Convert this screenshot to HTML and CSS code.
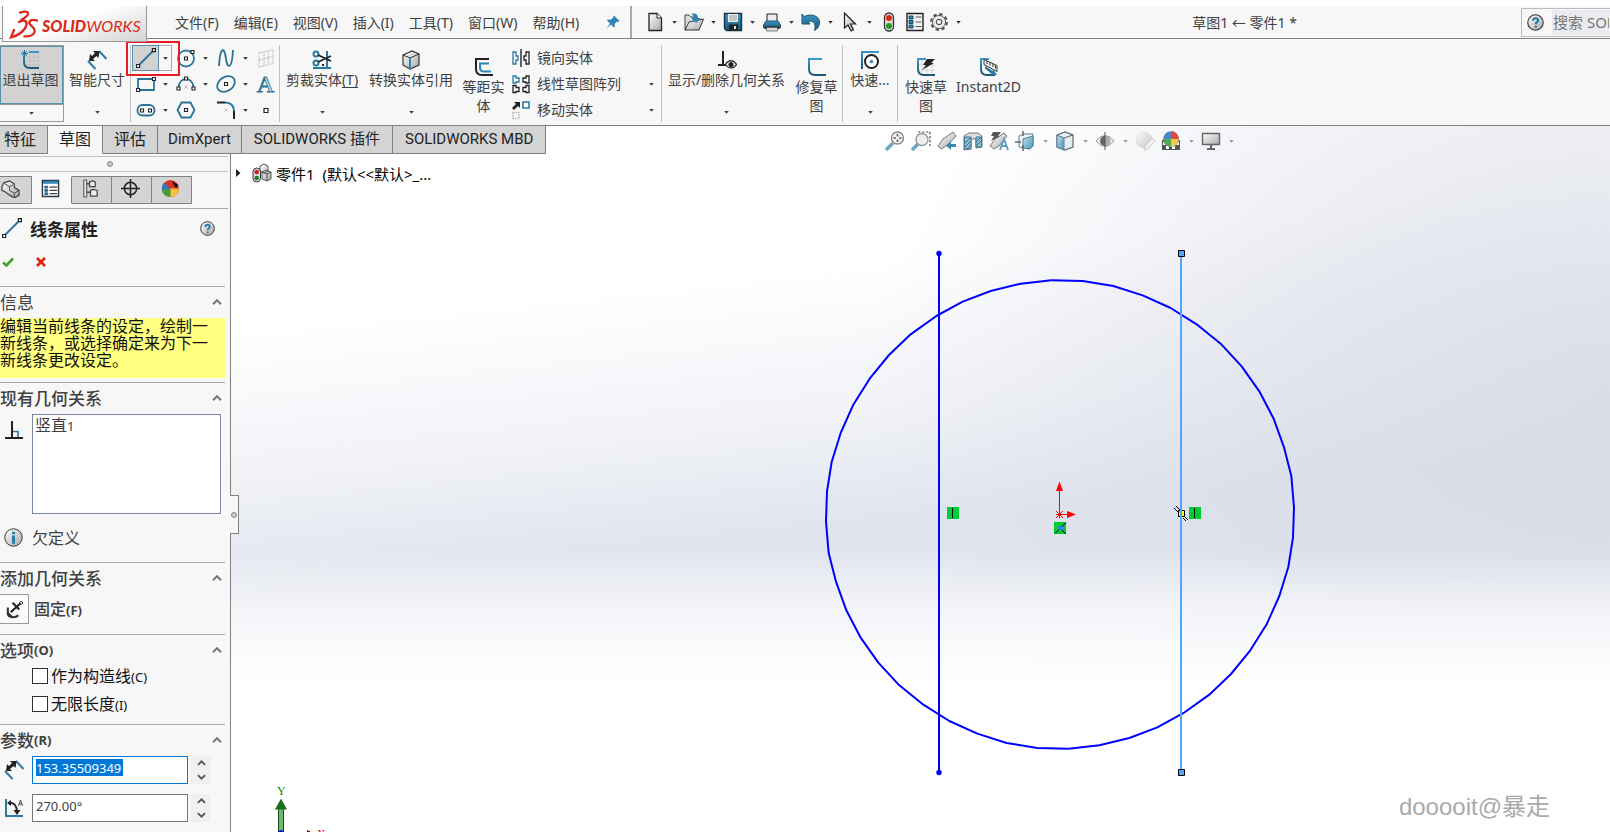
FILE: index.html
```html
<!DOCTYPE html>
<html lang="zh-CN">
<head>
<meta charset="utf-8">
<title>草图1 ← 零件1 *</title>
<link rel="stylesheet" href="styles.css">
</head>
<body>
<svg class="sprite" aria-hidden="true">
  <defs>
    <linearGradient id="blue" x1="0" y1="0" x2="0" y2="1"><stop offset="0" stop-color="#3a96c4"/><stop offset="1" stop-color="#1d5674"/></linearGradient>
    <linearGradient id="grey" x1="0" y1="0" x2="1" y2="1"><stop offset="0" stop-color="#fff"/><stop offset="1" stop-color="#a8a8a8"/></linearGradient>
    <linearGradient id="sky" x1="0" y1="0" x2="1" y2="1"><stop offset="0" stop-color="#c4e2f0"/><stop offset="1" stop-color="#4c93b8"/></linearGradient>
    <symbol id="caret" viewBox="0 0 6 4"><path d="M0 0h6L3 3.500z" fill="currentColor"/></symbol>
    <symbol id="line" viewBox="0 0 20 20"><path d="M3 17 17 3" stroke="#2a7394" stroke-width="1.800"/><path d="M.6 16.500h3v3h-3zM16.400.6h3v3h-3z" fill="#fff" stroke="#222" stroke-width="1.200"/></symbol>
    <symbol id="dim" viewBox="0 0 20 20"><path d="m1 11 7.500 8M12 1l7.500 8" stroke="#2a7aa2" stroke-width="2"/><path d="m2 11 1-7 2 2 3-3-2-2h6.500l-1 7-2-2-3.500 3 2 2z" fill="#222"/></symbol>
    <symbol id="help" viewBox="0 0 16 16"><circle cx="8" cy="8" r="7.300" fill="url(#grey)" stroke="#333"/><path d="M5.700 6.300c0-3.200 4.900-2.900 4.800-.3C10.400 7.600 8.200 7.700 8.200 9.600" fill="none" stroke="#2578a5" stroke-width="2"/><path d="M7.200 11h2v2h-2z" fill="#2578a5"/></symbol>
    <symbol id="chev" viewBox="0 0 10 6"><path d="m1 5.200 4-4 4 4" fill="none" stroke="currentColor" stroke-width="2"/></symbol>
    <symbol id="sketch" viewBox="0 0 20 20"><path d="M15 2H2v10q0 6 6 6h11" fill="none" stroke="url(#blue)" stroke-width="2"/></symbol>
  </defs>
</svg>

<header class="topbar">
  <div class="logo">
    <svg class="logo-mark" viewBox="0 0 90 90" fill="none" stroke="#da291c" stroke-linecap="round"><path d="M36 11c14-5 26-4 24 4-2 7-12 13-20 18" stroke-width="7"/><path d="M33 39c16-8 25-4 22 10-4 16-24 31-46 36l9-22" stroke-width="7"/><path d="M88 35c-12-4-24-3-24 6s18 13 16 26c-2 12-17 16-31 15" stroke-width="7"/></svg>
    <span class="logo-text"><b>SOLID</b>WORKS</span>
  </div>
  <nav class="menu">
    <button>文件(F)</button><button>编辑(E)</button><button>视图(V)</button><button>插入(I)</button><button>工具(T)</button><button>窗口(W)</button><button>帮助(H)</button>
  </nav>
  <button class="pin" aria-label="固定菜单"><svg viewBox="0 0 14 14"><path d="m8 .5 5.500 5.500-1 1-1.500-.5-2.500 2.500.5 2.500-1 1L5 9.500.5 13.500 4 8.500.8 5.300l1-.8 2.700.3L7.500 2.500 7 1.500z" fill="#2f86b5"/></svg></button>
  <div class="quick">
    <button class="q-icon" aria-label="新建"><svg viewBox="0 0 20 20"><path d="M4 1.500h8l4.500 4.500v12.500H4z" fill="url(#grey)" stroke="#222" stroke-width="1.300"/><path d="M12 1.500V6h4.500" fill="#fff" stroke="#222"/></svg></button><button class="dd" aria-label="更多"><svg><use href="#caret"/></svg></button>
    <button class="q-icon" aria-label="打开"><svg viewBox="0 0 20 20"><path d="M1 18V3h4l2 2h3v5l-5 2z" fill="#ddd" stroke="#444"/><path d="m1 18 4-8 14.500-3L15 18z" fill="url(#grey)" stroke="#333"/><path d="M7 2c5-1.500 7 1 7 4h3l-5 5-5-5h3c0-2-1-3-3-4z" fill="#2f86b5"/></svg></button><button class="dd" aria-label="更多"><svg><use href="#caret"/></svg></button>
    <button class="q-icon" aria-label="保存"><svg viewBox="0 0 20 20"><path d="M1.500 1.500h17v17h-15l-2-2z" fill="url(#blue)" stroke="#1b3443" stroke-width="1.400"/><path d="M5 2h10v8H5z" fill="#eee"/><path d="M6 4h8M6 6h8M6 8h8" stroke="#999"/><path d="M6 12.500h9v6H6z" fill="#222"/><path d="M11 14h2v3h-2z" fill="#ddd"/></svg></button><button class="dd" aria-label="更多"><svg><use href="#caret"/></svg></button>
    <button class="q-icon" aria-label="打印"><svg viewBox="0 0 20 20"><path d="M5 2h10v8H5z" fill="#eee" stroke="#222"/><path d="M1.500 13 4 9h12l2.500 4v3h-17z" fill="url(#blue)" stroke="#24546d"/><path d="M3 14.500h14V17H3z" fill="#222"/><path d="M4.500 15.500h11v3.500h-11z" fill="#ddd" stroke="#555" stroke-width=".7"/></svg></button><button class="dd" aria-label="更多"><svg><use href="#caret"/></svg></button>
    <button class="q-icon" aria-label="撤消"><svg viewBox="0 0 20 20"><path d="m1 2 2.500 2.500C9 1.500 18 3 18.500 10c.2 4-2 7-5 8.500 1-3 1.500-9-4.500-9.500l-2 .3 2 2.700H1z" fill="url(#blue)" stroke="#1d5674"/></svg></button><button class="dd" aria-label="更多"><svg><use href="#caret"/></svg></button>
    <button class="q-icon" aria-label="选择"><svg viewBox="0 0 20 20"><path d="M4.500 1v15l3.500-3 3 6 2.500-1.300-3-5.700h5z" fill="url(#grey)" stroke="#222" stroke-width="1.200"/></svg></button><button class="dd" aria-label="更多"><svg><use href="#caret"/></svg></button>
    <button class="q-icon" aria-label="重建"><svg viewBox="0 0 20 20"><rect x="5.500" y="1" width="9" height="18" rx="4.500" fill="#ddd" stroke="#333" stroke-width="1.300"/><circle cx="10" cy="6" r="3" fill="#dd2a12"/><circle cx="10" cy="14" r="3" fill="#299a1d"/></svg></button><button class="q-icon wide" aria-label="文件属性"><svg viewBox="0 0 20 20"><path d="M2 1.500h16v17H2z" fill="#f2f2f2" stroke="#222" stroke-width="1.400"/><path d="M4 4h4v3H4zM4 8.500h4v3H4zM4 13h4v3H4z" fill="#2f86b5" stroke="#174a64"/><path d="M10.500 5h6M10.500 10h6M10.500 14.500h6" stroke="#555"/></svg></button><button class="q-icon" aria-label="选项"><svg viewBox="0 0 20 20"><circle cx="10" cy="10" r="7.800" fill="none" stroke="#555" stroke-width="2.200" stroke-dasharray="3.400 2.730"/><circle cx="10" cy="10" r="6.500" fill="#f3f3f3" stroke="#555"/><circle cx="10" cy="10" r="2.700" fill="#fff" stroke="#555" stroke-width="1.200"/></svg></button><button class="dd" aria-label="更多"><svg><use href="#caret"/></svg></button>
  </div>
  <div class="doc-title">草图1 ← 零件1 *</div>
  <div class="search"><svg class="search-help"><use href="#help"/></svg><input type="text" aria-label="搜索" placeholder="搜索 SOLIDWORKS 帮助"></div>
</header>

<section class="ribbon" aria-label="草图工具">
  <div class="group">
    <div class="exit">
      <button class="exit-main"><svg class="ic" viewBox="0 0 20 20"><path d="M9 3v14M13 3v14M17 3v14M5 7h15M5 11h15M5 15h15" stroke="#bbb" stroke-width=".8"/><path d="M18 2H8M3 6v6q0 6 6 6h9" fill="none" stroke="url(#blue)" stroke-width="2"/><path d="M3.500 0v7M0 3.500h7M1 1l5 5M6 1 1 6" stroke="#2578a5"/></svg><span>退出草图</span></button>
      <button class="exit-more" aria-label="更多"><svg class="caret"><use href="#caret"/></svg></button>
    </div>
    <button class="tool w-dim"><svg class="ic"><use href="#dim"/></svg><span>智能尺寸</span><svg class="caret"><use href="#caret"/></svg></button>
  </div>
  <div class="group sketch-grid">
    <button class="cell on" aria-label="直线"><svg><use href="#line"/></svg></button><button class="dd on-dd" aria-label="更多"><svg><use href="#caret"/></svg></button>
    <button class="cell" aria-label="圆"><svg viewBox="0 0 20 20"><circle cx="10" cy="10.500" r="8" fill="none" stroke="#2a7aa2" stroke-width="1.800"/><path d="M8.500 9h3v3h-3zM15 2.500h3v3h-3z" fill="#fff" stroke="#222" stroke-width="1.100"/></svg></button><button class="dd" aria-label="更多"><svg><use href="#caret"/></svg></button>
    <button class="cell" aria-label="样条曲线"><svg viewBox="0 0 20 20"><path d="M3 18C4-1 8-1 9.500 8 11 22 16 22 17 2" fill="none" stroke="#2a7394" stroke-width="1.800"/></svg></button><button class="dd" aria-label="更多"><svg><use href="#caret"/></svg></button>
    <button class="cell" aria-label="基准面"><svg viewBox="0 0 20 20"><path d="M3 5 17 1.500v14L3 19zM3 12l14-3.500M8 4v13.500M12.500 3v13.500" fill="none" stroke="#c4c4c4" stroke-width="1.300" stroke-dasharray="1.500 1"/></svg></button>

    <button class="cell" aria-label="矩形"><svg viewBox="0 0 20 20"><path d="M2 5h16v11H2z" fill="none" stroke="#2a7394" stroke-width="1.800"/><path d="M.6 14.500h3v3h-3zM16.400 3.500h3v3h-3z" fill="#fff" stroke="#222" stroke-width="1.100"/></svg></button><button class="dd" aria-label="更多"><svg><use href="#caret"/></svg></button>
    <button class="cell" aria-label="圆弧"><svg viewBox="0 0 20 20"><path d="M2.500 14c0-12 15-12 15 0" fill="none" stroke="#2a7394" stroke-width="1.800"/><path d="M1 13h3v3H1zM16 13h3v3h-3zM8.500 3h3v3h-3z" fill="#fff" stroke="#222" stroke-width="1.100"/><path d="m8.500 11.500 3 3M11.500 11.500l-3 3" stroke="#bbb"/></svg></button><button class="dd" aria-label="更多"><svg><use href="#caret"/></svg></button>
    <button class="cell" aria-label="椭圆"><svg viewBox="0 0 20 20"><ellipse cx="10" cy="10" rx="9.500" ry="7" transform="rotate(-35 10 10)" fill="none" stroke="#2a7394" stroke-width="1.800"/><path d="M8.500 8.500h3v3h-3z" fill="#fff" stroke="#222" stroke-width="1.100"/></svg></button><button class="dd" aria-label="更多"><svg><use href="#caret"/></svg></button>
    <button class="cell letter">A</button>

    <button class="cell" aria-label="槽口"><svg viewBox="0 0 20 20"><rect x="1.500" y="5" width="17" height="10.500" rx="5" fill="none" stroke="#2a7394" stroke-width="1.800"/><path d="M4.500 9h3v3h-3zM12.500 9h3v3h-3z" fill="#fff" stroke="#222" stroke-width="1.100"/></svg></button><button class="dd" aria-label="更多"><svg><use href="#caret"/></svg></button>
    <button class="cell" aria-label="多边形"><svg viewBox="0 0 20 20"><path d="m1.500 10 4-7.500h9l4 7.500-4 7.500h-9z" fill="none" stroke="#2a7394" stroke-width="1.800"/><path d="M8.500 8.500h3v3h-3z" fill="#fff" stroke="#222" stroke-width="1.100"/></svg></button><span></span>
    <button class="cell" aria-label="圆角"><svg viewBox="0 0 20 20"><path d="M1 2.500h8" stroke="#222" stroke-width="2"/><path d="M9 2.500q9 0 9 9" fill="none" stroke="#2a7aa2" stroke-width="2"/><path d="M18 11v8" stroke="#222" stroke-width="2"/><path d="m8.500 8.500 3 3M11.500 8.500l-3 3" stroke="#bbb"/></svg></button><button class="dd" aria-label="更多"><svg><use href="#caret"/></svg></button>
    <button class="cell" aria-label="点"><svg viewBox="0 0 20 20"><path d="M8 8.500h4v4H8z" fill="#fff" stroke="#222" stroke-width="1.200"/></svg></button>
    <div class="callout"></div>
  </div>
  <div class="group">
    <button class="tool w-trim"><svg class="ic" viewBox="0 0 20 20"><path d="M15 1v18M1 18h18" stroke="#2a7aa2" stroke-width="2"/><circle cx="4" cy="4" r="2.500" fill="none" stroke="#2a7aa2" stroke-width="2"/><circle cx="4" cy="13" r="2.500" fill="none" stroke="#2a7aa2" stroke-width="2"/><path d="m6 5 13 6M6 12l13-6M10 15h2" stroke="#222" stroke-width="1.800"/></svg><span>剪裁实体<u class="key">(T)</u></span><svg class="caret"><use href="#caret"/></svg></button>
    <button class="tool w-convert"><svg class="ic" viewBox="0 0 20 20"><path d="m2 5 9-4 7 3v11l-9 4-7-4z" fill="url(#grey)" stroke="#333" stroke-width="1.200"/><path d="m2 5 7 3 9-4" fill="none" stroke="#333"/><path d="M9 8v11" stroke="#2f86b5" stroke-width="2"/></svg><span>转换实体引用</span><svg class="caret"><use href="#caret"/></svg></button>
    <button class="tool low w-offset"><svg class="ic" viewBox="0 0 20 20"><path d="M15 2H2v10q0 6 6 6h11" fill="none" stroke="#222" stroke-width="2"/><path d="M15 6.500H6v4q0 4 4 4h7" fill="none" stroke="#2f86b5" stroke-width="2"/></svg><span>等距实体</span></button>
    <div class="list">
      <button><svg viewBox="0 0 20 20" fill="none"><path d="M10 1v18" stroke="#222" stroke-width="1.400"/><path d="M2 4h3v4h2v4H5v4H2z" stroke="#2a7aa2" stroke-width="1.300"/><path d="M18 4h-3v4h-2v4h2v4h3z" stroke="#222" stroke-width="1.300"/></svg><span>镜向实体</span></button>
      <button><svg viewBox="0 0 20 20" fill="none" stroke-width="1.300"><path d="M2 2h3v2h3v4H5v1H2z" stroke="#2a7aa2"/><path d="M12 4h3V2h3v7h-3V8h-3zM2 11.500h3v2h3v4H5v1H2zM12 13.500h3v-2h3v7h-3v-1h-3z" stroke="#222"/></svg><span>线性草图阵列</span><svg class="caret"><use href="#caret"/></svg></button>
      <button><svg viewBox="0 0 20 20"><path d="m1 8 4-4-2-2h6v6L7 6 3 10z" fill="#222"/><path d="M12 2h6v6h-6z" fill="#fff" stroke="#2a7aa2" stroke-width="1.600"/><path d="M2 12.500h6v6H2z" fill="none" stroke="#bbb" stroke-width="1.600" stroke-dasharray="1.500 1"/></svg><span>移动实体</span><svg class="caret"><use href="#caret"/></svg></button>
    </div>
  </div>
  <div class="group">
    <button class="tool w-rel"><svg class="ic" viewBox="0 0 20 20"><path d="M6 1v14M1 15h8" stroke="#222" stroke-width="2"/><path d="M8.500 14.500c3-5 8-5 11 0-3 4.500-8 4.500-11 0z" fill="#fff" stroke="#333" stroke-width="1.300"/><circle cx="14" cy="14.500" r="2.600" fill="#222"/></svg><span>显示/删除几何关系</span><svg class="caret"><use href="#caret"/></svg></button>
    <button class="tool low w-fix"><svg class="ic"><use href="#sketch"/></svg><span>修复草图</span></button>
  </div>
  <div class="group">
    <button class="tool w-snap"><svg class="ic" viewBox="0 0 20 20"><path d="M2 19V2h17" fill="none" stroke="url(#blue)" stroke-width="2"/><circle cx="11.500" cy="11.500" r="6.500" fill="#fff" stroke="#222" stroke-width="2"/><circle cx="11.500" cy="11.500" r="1.700" fill="#2f86b5"/></svg><span>快速...</span><svg class="caret"><use href="#caret"/></svg></button>
  </div>
  <div class="group last">
    <button class="tool low w-rapid"><svg class="ic" viewBox="0 0 20 20"><path d="M6 2v17M11 2v17M16 2v17M1 8h18M1 13h18" stroke="#ccc" stroke-width=".8"/><path d="M10 2H2v10q0 6 6 6h11" fill="none" stroke="url(#blue)" stroke-width="2"/><path d="M11 2h8l-4 4h3L6 13l4-5H7z" fill="#222"/></svg><span>快速草图</span></button>
    <button class="tool low w-instant"><svg class="ic" viewBox="0 0 20 20"><path d="M10 2H2v10q0 6 6 6h8" fill="none" stroke="url(#blue)" stroke-width="2"/><path d="m5 2.500 13 6v6l-13-7z" fill="#eee" stroke="#333"/><path d="M8 4v3M11 5.500v3M14 7v3M16.500 8.500v3" stroke="#333"/><path d="m6 9 8 5v-2l4 6h-7l1-1.500-6-5z" fill="#2a7aa2"/></svg><span>Instant2D</span></button>
  </div>
</section>

<main class="workspace">
  <div class="backdrop"></div>
  <svg class="scene" viewBox="0 126 1610 706" preserveAspectRatio="xMidYMin meet" fill="none" role="img" aria-label="草图">
    <g transform="translate(820 270) scale(.33333)" stroke="#00f" stroke-width="6" stroke-linejoin="round">
      <path id="half" d="M694 31 788 33 880 48 968 76 1052 114 1130 163 1202 221 1265 289 1318 364 1361 446 1392 532 1414 618 1422 712 1419 803 1405 891 1378 978 1340 1063 1291 1141 1233 1212 1168 1274 1091 1329 1012 1372 928 1404 838 1426 746 1436"/>
      <use href="#half" transform="rotate(180 720 733.500)"/>
    </g>
    <path d="M939 253v520" stroke="#00f" stroke-width="2"/><circle cx="939" cy="253.500" r="2.700" fill="#00f"/><circle cx="939" cy="772.500" r="2.700" fill="#00f"/>
    <path d="M1181 253v520" stroke="#50a6fa" stroke-width="2"/>
    <path d="M1178.500 250.500h6v6h-6zM1178.500 769.500h6v6h-6z" fill="#50a6fa" stroke="#000"/>
    <path d="M1059.500 514v-24M1060 514.500h10M1056 511l7 7M1063 511l-7 7M1056 514.500h4M1059.500 514v4" stroke="#f00"/>
    <path d="m1056 491 3.500-9.500 3.500 9.500zM1067 511l9 3.500-9 3.500z" fill="#f00"/>
    <path d="M947 507h12v12h-12zM1189 507h12v12h-12zM1054 522h12v12h-12z" fill="#0c3"/>
    <path d="M952.500 508v10M1194.500 508v10M1055 533.500l11-11M1060 528l6 6" stroke="#000"/><circle cx="1060.500" cy="528" r="2.500" fill="#3b7df0"/>
    <path d="M1178.500 510.500h6v6h-6z" fill="#ff0" stroke="#000"/><path d="m1174 508 5 5M1176 506l4 4M1183 518l3 3M1185 517l3 3" stroke="#000"/><path d="M1181 509v9" stroke="#50a6fa" stroke-width="2"/>
    <path d="M278.500 808h5v24h-5z" fill="#72b572" stroke="#145214"/><path d="m275 809.500 6-11 6 11z" fill="#197019"/><path d="M278 832q3-4 6 0z" fill="#00f"/><path d="m307 830 4 2h-4z" fill="#600"/>
    <text class="axis" x="277" y="795" fill="#080">Y</text><text class="axis" x="317" y="838" fill="#f00">X</text>
  </svg>

  <div class="tab-row">
    <div class="tabs">
      <button class="tab">特征</button><button class="tab active">草图</button><button class="tab">评估</button><button class="tab latin narrow">DimXpert</button><button class="tab latin">SOLIDWORKS 插件</button><button class="tab latin">SOLIDWORKS MBD</button>
    </div>
    <div class="view-tools">
      <button aria-label="整屏显示全图"><svg viewBox="0 0 20 20"><path d="m1 19 7-7" stroke="#6ba6c6" stroke-width="3.500"/><circle cx="12.500" cy="7" r="6" fill="#f4f4f4" stroke="#888" stroke-width="1.400"/><path d="M12.500 3v8M8.500 7h8" stroke="#555" stroke-width="1.600" stroke-dasharray="2.500 3"/></svg></button>
      <button aria-label="局部放大"><svg viewBox="0 0 20 20"><path d="m1 19 6-6" stroke="#6ba6c6" stroke-width="3.500"/><circle cx="11" cy="8.500" r="6" fill="#eee" stroke="#999" stroke-width="1.400"/><path d="M7 1h12v14" fill="none" stroke="#555" stroke-width="1.200" stroke-dasharray="2.500 1.500"/></svg></button>
      <button aria-label="上一视图"><svg viewBox="0 0 20 20"><path d="m1 15 5-7L16 1l3 4-8 9-7 4z" fill="url(#grey)" stroke="#777"/><path d="M9 14.500 14 10v3h5v3h-5v3z" fill="#3b88b0"/></svg></button>
      <button aria-label="剖面视图"><svg viewBox="0 0 20 20"><path d="M1 5 6 2h9l4 3v11l-6 1V8H8v10l-7 1z" fill="#ddd" stroke="#777"/><path d="M1.500 6H8v12H1.500zM13 6h5.500v10H13z" fill="#8bc0da" stroke="#4a7287"/><path d="m2 12 5-5M2 16l6-6M4 18l4-4M13 11l5-5M13 15l5-5" stroke="#326b87"/></svg></button>
      <button aria-label="动态注解视图"><svg viewBox="0 0 20 20"><path d="m1 15 5-7L15 2l3 3-8 10-5 3z" fill="url(#grey)" stroke="#777"/><path d="M4 1h8l-3 4h2L2 10l3-5H2z" fill="#555"/><path d="m11 19 4-11 4 11M12.500 15h5" fill="none" stroke="#5b9dbf" stroke-width="1.800"/></svg></button>
      <button aria-label="视图定向"><svg viewBox="0 0 20 20"><path d="m4 5 4-2h10v12l-3 3-11-2z" fill="#eef5f9" stroke="#617f8e"/><path d="m8 8 10-3v10l-3 3-7-1z" fill="url(#sky)" stroke="#537f95"/><path d="M8 0v5M0 11h6M8 14v6" fill="none" stroke="#666" stroke-width="1.500"/></svg></button><button class="dd" aria-label="更多"><svg><use href="#caret"/></svg></button>
      <button aria-label="显示样式"><svg viewBox="0 0 20 20"><path d="m2 4 8-3 8 3v12l-8 3-8-3z" fill="#e4eff5" stroke="#666" stroke-width="1.200"/><path d="m2 4 7 3v12l-7-3z" fill="url(#sky)" stroke="#537f95"/><path d="m9 7 9-3" stroke="#666"/></svg></button><button class="dd" aria-label="更多"><svg><use href="#caret"/></svg></button>
      <button aria-label="隐藏/显示"><svg viewBox="0 0 20 20"><path d="M1 10q9-11 18 0-9 11-18 0z" fill="#eee" stroke="#999"/><circle cx="10" cy="10" r="5" fill="#666"/><path d="M10 1v18" stroke="#555"/><path d="M10.500 5a5 5 0 0 1 0 10z" fill="#aaa"/></svg></button><button class="dd" aria-label="更多"><svg><use href="#caret"/></svg></button>
      <button aria-label="编辑外观"><svg class="faint" viewBox="0 0 20 20"><circle cx="9" cy="9" r="8" fill="url(#grey)" stroke="#ccc"/><path d="m9 19 1-4 7-8 3 3-7 8z" fill="#eee" stroke="#aaa"/></svg></button>
      <button aria-label="应用布景"><svg viewBox="0 0 20 20"><path d="M1 9h18v10H1z" fill="#555"/><path d="M2 11h3v3H2zM15 11h3v3h-3zM5 15h3v3H5zM11 15h3v3h-3z" fill="#fff"/><circle cx="10" cy="8" r="7.800" fill="#4e83c7"/><path d="M10 8V.2A7.800 7.800 0 0 1 17.800 8z" fill="#e0483a"/><path d="M10 8h7.800A7.800 7.800 0 0 1 10 15.800z" fill="#f0c64c"/><path d="M2.200 8H10v7.800A7.800 7.800 0 0 1 2.200 8z" fill="#52ab51"/></svg></button><button class="dd" aria-label="更多"><svg><use href="#caret"/></svg></button>
      <button aria-label="视图设定"><svg viewBox="0 0 20 20"><path d="M1.500 2.500h17v11h-17z" fill="url(#grey)" stroke="#666" stroke-width="1.400"/><path d="M10 14v4M6 18h8" stroke="#666" stroke-width="2"/></svg></button><button class="dd" aria-label="更多"><svg><use href="#caret"/></svg></button>
    </div>
  </div>

  <div class="body-row">
    <aside class="panel">
      <div class="grip"><i class="dot"></i></div>
      <div class="ptabs">
        <button class="first" aria-label="设计树"><svg viewBox="0 0 20 20"><path d="m1 8 2-4 6-2 5 3v4l5 3v5l-5 3-5-3-4-3-4-2z" fill="url(#grey)" stroke="#444" stroke-width="1.300"/><path d="m4 5 5 3 4-2M9 8v4l5 3v4M14 15l5-3" fill="none" stroke="#444"/></svg></button>
        <button class="active" aria-label="属性"><svg viewBox="0 0 20 20"><path d="M1.500 1.500h17v17h-17z" fill="#fff" stroke="#2b3a44" stroke-width="1.500"/><path d="M2 2h16v3H2z" fill="#2f86b5"/><path d="M4 7.500h3v2H4zM4 11h3v2H4zM4 14.500h3v2H4z" fill="#2f86b5" stroke="#174a64" stroke-width=".8"/><path d="M9 8.500h8M9 12h8M9 15.500h8" stroke="#444" stroke-width="1.300"/></svg></button>
        <button aria-label="配置"><svg viewBox="0 0 20 20"><path d="M3 1v18h3V1z" fill="#eee" stroke="#444"/><path d="M6 5h4M6 14h4" stroke="#444" stroke-width="1.500"/><path d="m9 3 3-1 3 1v5H9zM10 12l3-1 4 1v6h-7z" fill="#eee" stroke="#444" stroke-width="1.300"/></svg></button>
        <button aria-label="尺寸专家"><svg viewBox="0 0 20 20"><circle cx="10" cy="10" r="6.500" fill="none" stroke="#222" stroke-width="1.600"/><path d="M10 0v20M0 10h20" stroke="#222" stroke-width="1.600"/></svg></button>
        <button aria-label="外观"><svg viewBox="0 0 20 20"><circle cx="10" cy="10" r="9" fill="#d93524"/><path d="M10 10 3 4a9 9 0 0 0-2 8z" fill="#3678c5"/><path d="m1 12 9-2v9a9 9 0 0 1-9-7z" fill="#3ba13a"/><path d="M10 10h9a9 9 0 0 1-9 9z" fill="#f1c53b"/><path d="m11 2 7 4-2 4z" fill="#111"/></svg></button>
      </div>
      <div class="ptitle">
        <svg class="ic"><use href="#line"/></svg><h1>线条属性</h1><button class="help" aria-label="帮助"><svg><use href="#help"/></svg></button>
      </div>
      <div class="confirm">
        <button aria-label="确定"><svg viewBox="0 0 12 10"><path d="m1 5.500 3.500 3L11 1.500" fill="none" stroke="#3da528" stroke-width="2.600"/></svg></button>
        <button aria-label="取消"><svg class="x" viewBox="0 0 10 10"><path d="m1 1 8 8M9 1 1 9" stroke="#dd2309" stroke-width="2.600"/></svg></button>
      </div>
      <section class="sec">
        <h2 class="plain">信息<svg><use href="#chev"/></svg></h2>
        <p class="note">编辑当前线条的设定，绘制一新线条，或选择确定来为下一新线条更改设定。</p>
      </section>
      <section class="sec existing">
        <h2>现有几何关系<svg><use href="#chev"/></svg></h2>
        <div class="rel"><svg class="ic" viewBox="0 0 20 20"><path d="M8 1v16M1 18h18" stroke="#222" stroke-width="2"/><path d="M9 11.500h5V17" fill="none" stroke="#2a7aa2" stroke-width="1.600"/></svg><div class="relbox">竖直<small>1</small></div></div>
        <div class="status"><svg viewBox="0 0 20 20"><circle cx="10" cy="10" r="9.200" fill="url(#grey)" stroke="#333"/><path d="M8.500 4h3v2.500h-3zM8.500 8h3v8.500h-3z" fill="#2578a5"/></svg>欠定义</div>
      </section>
      <section class="sec">
        <h2>添加几何关系<svg><use href="#chev"/></svg></h2>
        <button class="fix"><span class="fixbox"><svg viewBox="0 0 20 20"><path d="M8 3 15 10M6 13 17 3" stroke="#222" stroke-width="2.200"/><circle cx="17" cy="3" r="1.500" fill="#fff" stroke="#222"/><path d="M3 8v7c2 4 8 4 11 1" fill="none" stroke="#333" stroke-width="2.200"/><path d="M3 18h6l-6-6z" fill="#333"/></svg></span><span>固定<small>(F)</small></span></button>
      </section>
      <section class="sec options">
        <h2>选项<small>(O)</small><svg><use href="#chev"/></svg></h2>
        <label><input type="checkbox"><span>作为构造线<small>(C)</small></span></label>
        <label><input type="checkbox"><span>无限长度<small>(I)</small></span></label>
      </section>
      <section class="sec">
        <h2>参数<small>(R)</small><svg><use href="#chev"/></svg></h2>
        <div class="param"><svg class="ic"><use href="#dim"/></svg><input class="selected" type="text" aria-label="长度" value="153.35509349"><div class="spin"><button aria-label="增加"><svg><use href="#chev"/></svg></button><button class="down" aria-label="减少"><svg><use href="#chev"/></svg></button></div></div>
        <div class="param"><svg class="ic" viewBox="0 0 20 20"><path d="M2 1v17h17" fill="none" stroke="#2a7aa2" stroke-width="2"/><path d="M5 5c5-1 8 3 8 9" fill="none" stroke="#222" stroke-width="1.800"/><path d="m3 5 4-3v6zM9.500 12h7L13 17z" fill="#222"/><path d="m14.500 8 2-6 2 6M15 6h3" fill="none" stroke="#444"/></svg><input type="text" aria-label="角度" value="270.00°"><div class="spin"><button aria-label="增加"><svg><use href="#chev"/></svg></button><button class="down" aria-label="减少"><svg><use href="#chev"/></svg></button></div></div>
      </section>
      <button class="handle" aria-label="折叠面板"><i class="dot"></i></button>
    </aside>
    <div class="viewport">
      <button class="tree"><svg class="tri" viewBox="0 0 5 8"><path d="m0 0 4.500 4L0 8z" fill="#222"/></svg><svg class="part" viewBox="0 0 20 20"><path d="m8 3 4-2 4 2v5l-4 2-4-2zM10 9l4-2 5 2v7l-4 2-5-2z" fill="url(#grey)" stroke="#555"/><path d="M10 9l5 2 4-2M15 11v7" fill="none" stroke="#555"/><rect x="1" y="5" width="7.500" height="14" rx="3.700" fill="#ddd" stroke="#333"/><circle cx="4.700" cy="9" r="2.300" fill="#c22"/><circle cx="4.700" cy="15" r="2.300" fill="#182"/></svg><span>零件1&nbsp; (默认&lt;&lt;默认&gt;_...</span></button>
      <div class="watermark">dooooit@暴走</div>
    </div>
  </div>
</main>
</body>
</html>
```
FILE: styles.css
```css
* { box-sizing: border-box; }
body {
  margin: 0;
  height: 100vh;
  display: flex;
  flex-direction: column;
  overflow: hidden;
  padding-top: 6px;
  background: #fff;
  color: #404040;
  font-family: "Noto Sans", "Noto Sans CJK SC", sans-serif;
  font-size: 14px;
}
button {
  margin: 0;
  padding: 0;
  border: 0;
  background: none;
  color: inherit;
  font: inherit;
}
svg { display: block; flex: none; }
.sprite { position: absolute; width: 0; height: 0; }
.ic { width: 20px; height: 20px; }
.caret { width: 5px; height: 3px; }

/* Top bar */
.topbar {
  position: relative;
  z-index: 2;
  flex: none;
  height: 33px;
  display: flex;
  align-items: center;
  background: #f7f7f7;
  border-bottom: 1px solid #808080;
}
.logo {
  align-self: flex-start;
  flex: none;
  width: 145px;
  height: 36px;
  margin-left: 2px;
  padding-left: 5px;
  display: flex;
  align-items: center;
  border: 1px solid #999;
  border-top: 0;
  background: linear-gradient(160deg, #fff 45%, #d4d4d4);
}
.logo-mark { width: 30px; height: 30px; }
.logo-text {
  margin-left: 4px;
  padding-top: 4px;
  color: #da291c;
  font: italic 16px/20px Lato, sans-serif;
}
.logo-text b { font-weight: 900; }
.menu { display: flex; gap: 15px; margin-left: 28px; flex: none; }
.menu button { white-space: nowrap; }
.pin { margin-left: 27px; flex: none; }
.pin svg { width: 14px; height: 14px; }
.quick {
  flex: none;
  height: 32px;
  margin-left: 10px;
  padding-left: 13px;
  display: flex;
  align-items: center;
  border-left: 2px solid #aaa;
}
.q-icon { width: 20px; }
.q-icon svg { width: 20px; height: 20px; }
.q-icon.wide { width: 30px; padding-left: 6px; }
.dd { width: 19px; display: grid; place-items: center; color: #333; }
.dd svg { width: 5px; height: 3px; }
.doc-title { flex: 1; padding-left: 224px; white-space: nowrap; }
.search {
  flex: none;
  width: 89px;
  height: 29px;
  display: flex;
  align-items: center;
  gap: 8px;
  padding: 1px 0 1px 5px;
  border: 1px solid #bbb;
  border-right: 0;
}
.search-help { width: 17px; height: 17px; }
.search input {
  flex: 1;
  min-width: 0;
  height: 25px;
  padding: 0 1px;
  border: 0;
  background: #e9ebf0;
  font: inherit;
  font-size: 15px;
}
.search input::placeholder { color: #777; }

/* Ribbon */
.ribbon {
  position: relative;
  z-index: 1;
  flex: none;
  height: 87px;
  padding: 6px 0 3px;
  display: flex;
  background: #f7f7f7;
  border-bottom: 1px solid #808080;
}
.group { display: flex; flex: none; border-right: 1px solid #c0c0c0; }
.group.last { border: 0; }
.exit { width: 64px; display: flex; flex-direction: column; border: 1px solid #999; border-left: 0; }
.exit-main {
  height: 58px;
  padding: 4px 2px 0 0;
  display: flex;
  flex-direction: column;
  align-items: center;
  line-height: 19px;
  background: #d2d2d2;
  outline: 1px solid #5b8fb0;
  outline-offset: -1px;
}
.exit-more { flex: 1; display: grid; place-items: center; border-top: 1px solid #999; }
.tool {
  height: 78px;
  padding-top: 5px;
  display: flex;
  flex-direction: column;
  align-items: center;
  line-height: 19px;
}
.tool > .caret { margin-top: 22px; }
.tool.low { padding-top: 12px; }
.tool.low span { padding: 0 4px; }
.key { text-underline-offset: 2px; }
.w-dim { width: 66px; }
.w-trim { width: 84px; }
.w-convert { width: 94px; }
.w-offset { width: 51px; }
.w-rel { width: 129px; }
.w-fix { width: 51px; }
.w-snap { width: 54px; }
.w-rapid { width: 56px; }
.w-instant { width: 69px; }
.sketch-grid {
  position: relative;
  width: 149px;
  padding-left: 1px;
  display: grid;
  grid-template-columns: 27px 13px 27px 13px 27px 13px 27px;
  grid-auto-rows: 26px;
}
.sketch-grid .dd { width: 13px; }
.cell { display: grid; place-items: center; }
.cell svg { width: 20px; height: 20px; }
.cell.on { background: #d2d2d2; border: 1px solid #5b8fb0; }
.on-dd { border: 1px solid #aaa; border-left: 0; }
.letter {
  color: #f7f7f7;
  font: 24px/24px "Liberation Serif", serif;
  -webkit-text-stroke: 1px #2a7394;
}
.callout {
  position: absolute;
  left: -5px;
  top: -4px;
  width: 54px;
  height: 35px;
  border: 2px solid #e81c24;
}
.list { width: 152px; padding-left: 2px; }
.list button { width: 100%; height: 26px; display: flex; align-items: center; gap: 6px; }
.list button > svg:first-child { width: 20px; height: 20px; }
.list span { padding-bottom: 2px; }
.list .caret { margin: 0 7px 0 auto; }

/* Workspace */
.workspace { position: relative; flex: 1; min-height: 0; display: flex; flex-direction: column; background: #fff; }
.backdrop {
  position: absolute;
  inset: 0;
  background:
    radial-gradient(ellipse 46% 72% at 100% 36%, rgba(212, 216, 229, .72), rgba(213, 217, 229, .52) 40%, rgba(214, 218, 230, .22) 75%, rgba(220, 224, 235, 0)),
    linear-gradient(174deg, rgba(224, 228, 237, 0) 26%, rgba(224, 228, 237, .5) 44%, #e0e4ed 56%);
  -webkit-mask-image: linear-gradient(#000 60%, rgba(0, 0, 0, .4) 68%, rgba(0, 0, 0, 0) 79%);
  mask-image: linear-gradient(#000 60%, rgba(0, 0, 0, .4) 68%, rgba(0, 0, 0, 0) 79%);
}
.scene { position: absolute; inset: 0; width: 100%; height: 100%; }
.axis { font: 12px "Liberation Serif", serif; }
.tab-row { position: relative; flex: none; height: 28px; display: flex; }
.tabs { display: flex; height: 28px; }
.tab {
  padding: 0 11px;
  background: #d4d4d4;
  border-right: 1px solid #808080;
  border-bottom: 1px solid #808080;
  color: #222;
  font: 16px/27px Roboto, "Noto Sans CJK SC", sans-serif;
  white-space: nowrap;
}
.tab:first-child { padding-left: 4px; }
.tab.latin { padding: 0 12px; font-size: 15px; }
.tab.narrow { padding: 0 10px; }
.tab.active { background: #f7f7f7; border-bottom-color: #f7f7f7; }
.view-tools { position: absolute; left: 882px; top: 0; height: 30px; display: flex; align-items: center; }
.view-tools button { width: 26px; display: grid; place-items: center; }
.view-tools svg { width: 20px; height: 20px; }
.view-tools .faint { opacity: .6; }
.view-tools .dd { width: 14px; color: #999; }
.view-tools .dd svg { width: 5px; height: 3px; }
.body-row { position: relative; flex: 1; min-height: 0; display: flex; }

/* Property panel */
.panel {
  position: relative;
  flex: none;
  width: 231px;
  background: #f7f7f7;
  border-right: 1px solid #808080;
  font-size: 16px;
}
.panel small { font-size: 13px; }
.dot { display: block; width: 6px; height: 6px; border: 1px solid #888; border-radius: 50%; background: #ccc; }
.grip {
  height: 16px;
  margin: 2px 2px 4px 0;
  display: grid;
  place-items: center;
  padding-right: 8px;
  border: solid #c0c0c0;
  border-width: 1px 0;
}
.ptabs { display: flex; height: 33px; margin-right: 2px; border-bottom: 1px solid #a8a8a8; }
.ptabs button {
  width: 40px;
  height: 28px;
  padding: 0 2px 4px 0;
  display: grid;
  place-items: center;
  background: #d4d4d4;
  border: 1px solid #808080;
  border-left: 0;
}
.ptabs svg { width: 19px; height: 19px; }
.ptabs .first { width: 32px; padding-right: 11px; }
.ptabs .active { background: none; border-color: transparent #808080 transparent transparent; }
.ptitle { height: 40px; padding: 0 15px 2px 2px; display: flex; align-items: center; }
.ptitle h1 { flex: 1; margin: 0; padding-left: 8px; font-size: 17px; font-weight: 700; color: #222; }
.help svg { width: 15px; height: 15px; }
.confirm { height: 37px; padding: 8px 0 0 2px; display: flex; align-items: flex-start; gap: 22px; }
.confirm svg { width: 12px; height: 10px; }
.confirm .x { width: 10px; height: 10px; }
.sec { width: 225px; padding-bottom: 10px; border-top: 1px solid #a8a8a8; }
.sec:nth-of-type(1) { padding-bottom: 4px; }
.sec h2 {
  height: 31px;
  margin: 0;
  padding: 0 3px 2px 0;
  display: flex;
  align-items: center;
  font-size: 17px;
  font-weight: 500;
}
.sec h2 small { font-weight: 700; }
.sec h2.plain { font-weight: 400; }
.sec h2 svg { width: 10px; height: 6px; margin-left: auto; color: #777; }
.note { height: 60px; margin: 0; padding-right: 17px; background: #ffff80; color: #111; line-height: 17px; }
.existing { padding-bottom: 13px; }
.rel { display: flex; gap: 8px; padding-left: 4px; }
.rel .ic { margin-top: 6px; }
.relbox { width: 189px; height: 100px; padding: 0 2px; background: #fff; border: 1px solid #7a87a0; line-height: 20px; }
.status { height: 35px; padding: 11px 0 0 4px; display: flex; align-items: center; gap: 9px; }
.status svg { width: 19px; height: 19px; }
.fix { display: flex; align-items: center; gap: 5px; height: 30px; font-weight: 500; }
.fix > span:last-child { padding-bottom: 2px; }
.fix small { font-weight: 700; }
.fixbox { width: 29px; height: 30px; display: grid; place-items: center; border: 1px solid #999; border-left: 0; background: #fafafa; }
.fixbox svg { width: 19px; height: 19px; }
.options { padding-bottom: 7px; }
.options label { display: flex; align-items: center; height: 20px; margin-bottom: 8px; padding-left: 32px; gap: 3px; color: #111; }
.options label span { padding-bottom: 2px; }
.options label:last-child { margin-bottom: 3px; }
.options input { appearance: none; margin: 0; width: 16px; height: 16px; border: 1px solid #333; background: #fff; }
.param { display: flex; align-items: center; gap: 3px; height: 28px; margin-bottom: 10px; padding-left: 4px; }
.param .ic { margin-right: 5px; }
.param input {
  width: 156px;
  height: 28px;
  padding: 0 3px 4px;
  border: 1px solid #777;
  background: #fff;
  color: #404040;
  font: inherit;
  font-size: 13px;
}
.param input.selected {
  border-color: #0078d7;
  color: #fff;
  background: linear-gradient(#0078d7, #0078d7) 3px 2px / 87px 17px no-repeat #fff;
}
.spin { width: 20px; height: 28px; display: grid; place-items: center; background: #f0f0f0; color: #555; }
.spin svg { width: 9px; height: 6px; }
.spin .down svg { rotate: 180deg; }
.handle {
  position: absolute;
  left: 230px;
  top: 341px;
  width: 9px;
  height: 39px;
  display: grid;
  place-items: center;
  background: #f7f7f7;
  border: 1px solid #808080;
  border-left: 0;
}

/* Drawing area */
.viewport { position: relative; flex: 1; min-width: 0; display: flex; flex-direction: column; justify-content: space-between; }
.tree { display: flex; align-items: center; height: 24px; margin: 7px 0 0 5px; color: #000; font-size: 15px; }
.tri { width: 5px; height: 8px; }
.part { width: 20px; height: 20px; margin: 0 4px 0 11px; }
.watermark { align-self: flex-end; margin: 0 60px 9px 0; color: #aaa; font: 24px/32px "Liberation Sans", "Noto Sans CJK SC", sans-serif; }
```
